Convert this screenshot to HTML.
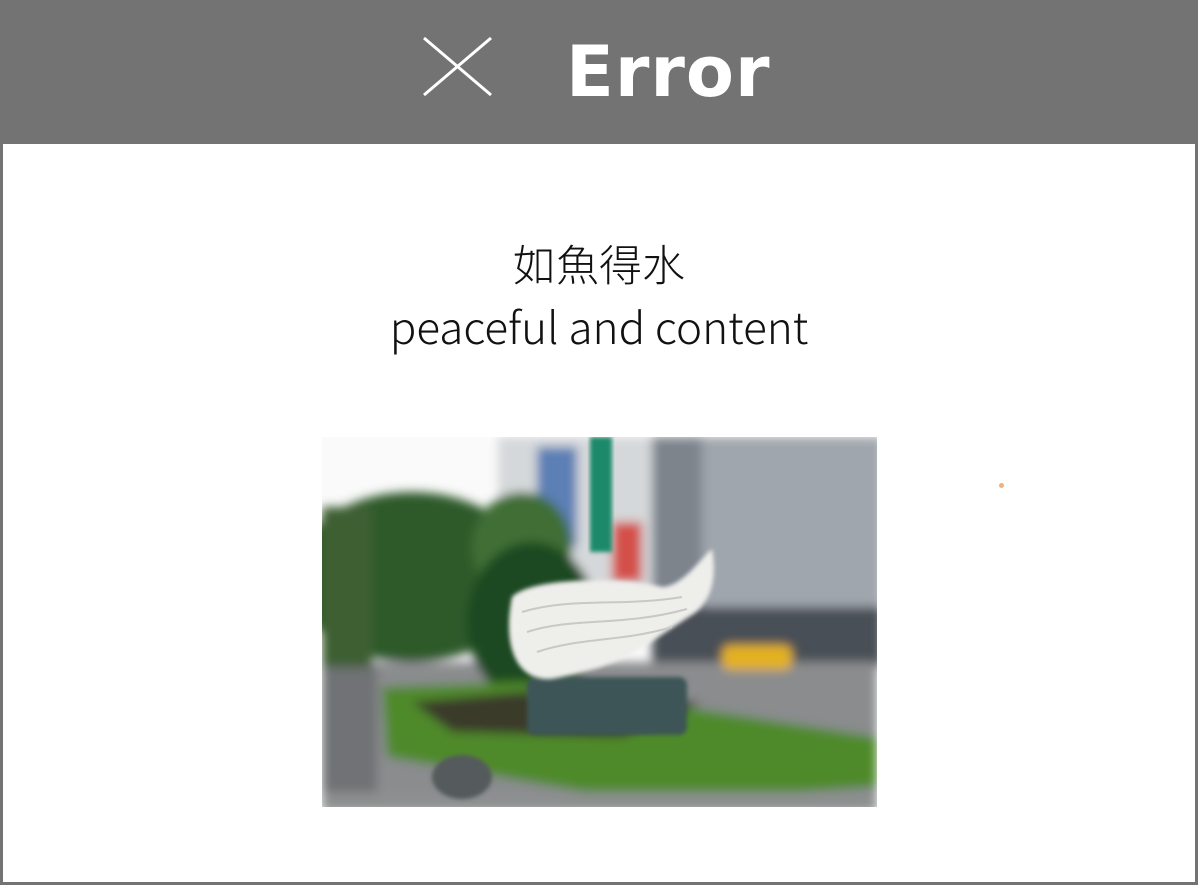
<!DOCTYPE html>
<html><head><meta charset="utf-8"><style>
html,body{margin:0;padding:0;}
body{width:1198px;height:885px;position:relative;background:#fff;overflow:hidden;}
.frame{position:absolute;left:0;top:0;width:1192px;height:879px;border:3px solid #737373;}
.hdr{position:absolute;left:0;top:0;width:1198px;height:144px;background:#737373;}
.err{position:absolute;left:566px;top:37px;font:bold 70px/70px "DejaVu Sans",sans-serif;color:#fff;letter-spacing:1px;}
.t{position:absolute;left:0;width:1198px;text-align:center;font-family:"Noto Sans CJK TC","Liberation Sans",sans-serif;font-weight:300;color:#111;}
.photo{position:absolute;left:322px;top:437px;width:555px;height:370px;overflow:hidden;}
</style></head><body>
<div class="frame"></div>
<div class="hdr"></div>
<svg style="position:absolute;left:420px;top:36px" width="76" height="62"><path d="M4 2 L71 59 M71 2 L4 59" stroke="#fff" stroke-width="3" fill="none"/></svg>
<div class="err">Error</div>
<div class="t" style="top:232px;font-size:43px;">如魚得水</div>
<div class="t" style="top:293px;font-size:44px;">peaceful and content</div>
<div class="photo">
<svg width="555" height="370" viewBox="0 0 555 370">
<defs><filter id="b" x="-20%" y="-20%" width="140%" height="140%"><feGaussianBlur stdDeviation="5"/></filter>
<filter id="b2"><feGaussianBlur stdDeviation="2"/></filter></defs>
<rect width="555" height="370" fill="#fafafa"/>
<g filter="url(#b)">
<rect x="176" y="0" width="160" height="180" fill="#d5d8da"/>
<rect x="215" y="10" width="40" height="100" fill="#5c7fb5"/>
<rect x="330" y="0" width="230" height="230" fill="#7d848c"/>
<rect x="380" y="0" width="180" height="170" fill="#a0a6ad"/>
<rect x="330" y="170" width="230" height="60" fill="#4a5057"/>
<rect x="290" y="85" width="30" height="60" fill="#d4504a"/>
<rect x="0" y="225" width="555" height="145" fill="#8a8c8e"/>
<rect x="0" y="230" width="55" height="140" fill="#6f7274"/>
<ellipse cx="90" cy="140" rx="120" ry="85" fill="#2e5a2a"/>
<ellipse cx="200" cy="110" rx="50" ry="55" fill="#3f6e35"/>
<rect x="0" y="70" width="50" height="160" fill="#3c5f30"/>
<ellipse cx="210" cy="185" rx="65" ry="80" fill="#1f4a22"/>
<path d="M60 250 L200 245 L555 300 L555 350 L320 365 L65 320 Z" fill="#4f8a2a"/>
<path d="M90 265 L200 255 L380 265 L300 300 L130 295Z" fill="#3a3a2a"/>
<rect x="400" y="208" width="70" height="25" rx="8" fill="#e3b120"/>
<rect x="0" y="355" width="555" height="20" fill="#8d8f90"/>
</g>
<rect x="268" y="0" width="22" height="115" fill="#1f8a6a" filter="url(#b2)"/>
<rect x="205" y="240" width="160" height="58" rx="8" fill="#3c5556" filter="url(#b2)"/>
<path d="M190 160 C210 140 300 140 340 150 C360 150 380 120 390 112 C395 140 390 165 370 178 C320 210 300 230 230 242 C195 245 180 210 190 160Z" fill="#eeeeeb" filter="url(#b2)"/>
<path d="M200 175 C250 160 300 170 360 160 M205 195 C250 180 300 190 365 172 M215 215 C260 200 300 205 350 190" stroke="#c8c8c4" stroke-width="2" fill="none"/>
<ellipse cx="140" cy="340" rx="30" ry="22" fill="#555a5c" filter="url(#b2)"/>
</svg>
</div>
<div style="position:absolute;left:999px;top:483px;width:5px;height:5px;border-radius:50%;background:#f4b07a"></div>
</body></html>
